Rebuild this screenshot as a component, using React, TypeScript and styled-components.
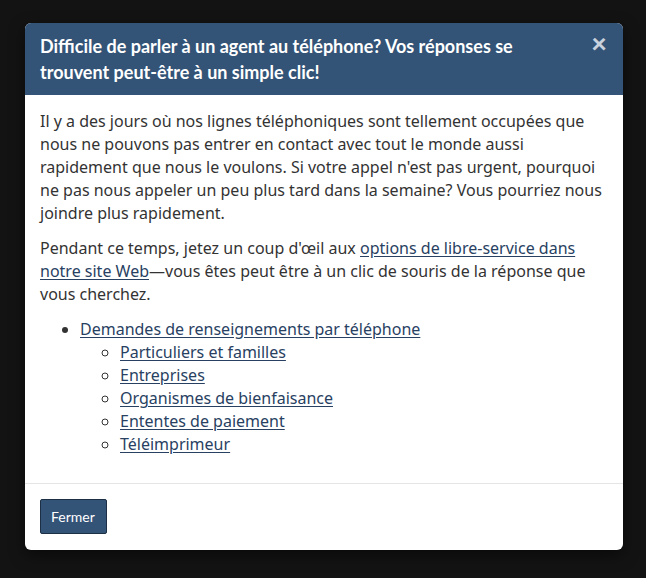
import React from "react";
import styled, { createGlobalStyle } from "styled-components";

const Global = createGlobalStyle`
  html, body { margin: 0; padding: 0; background: #131313; }
  body { font-family: "Noto Sans", sans-serif; }
  * { box-sizing: border-box; }
`;

const Backdrop = styled.div`
  min-height: 578px;
  padding: 23px 23px 0 25px;
  background: #131313;
`;

const Dialog = styled.div`
  width: 598px;
  background: #fff;
  border-radius: 6px;
  overflow: hidden;
  box-shadow: 0 5px 15px rgba(0, 0, 0, 0.5);
`;

const Header = styled.header`
  display: flex;
  align-items: flex-start;
  gap: 12px;
  background: #335377;
  padding: 10px 15px 10px 15px;
`;

const Title = styled.h2`
  flex: 1;
  margin: 0;
  font-family: "Lato", sans-serif;
  font-weight: 700;
  font-size: 18px;
  line-height: 26px;
  color: #fff;
`;

const Close = styled.button`
  border: 0;
  background: none;
  padding: 0;
  margin: 0 1px 0 0;
  font-family: "Lato", sans-serif;
  font-weight: 900;
  font-size: 27px;
  line-height: 20px;
  color: #c9d1dc;
  cursor: pointer;
`;

const Body = styled.div`
  padding: 15px 15px;
  color: #333;
  font-size: 16px;
  line-height: 23px;
`;

const P = styled.p`
  margin: 0 0 12px;
`;

const Link = styled.a`
  color: #284162;
  text-decoration: underline;
  text-underline-offset: 2px;
`;

const List = styled.ul<{ $nested?: boolean }>`
  margin: ${(p) => (p.$nested ? "0" : "0 0 12px")};
  padding-left: 40px;
  list-style-type: ${(p) => (p.$nested ? "circle" : "disc")};
`;

const Footer = styled.footer`
  border-top: 1px solid #e5e5e5;
  padding: 15px 15px 16px;
`;

const Button = styled.button`
  font-family: "Lato", sans-serif;
  font-size: 14px;
  line-height: 20px;
  padding: 7px 11px 6px 10px;
  color: #fff;
  background: #335377;
  border: 1px solid #1c2f45;
  border-radius: 2px;
  cursor: pointer;
`;

const subItems = [
  "Particuliers et familles",
  "Entreprises",
  "Organismes de bienfaisance",
  "Ententes de paiement",
  "Téléimprimeur",
];

export default function App() {
  return (
    <>
      <Global />
      <Backdrop>
        <Dialog role="dialog">
          <Header>
            <Title>
              Difficile de parler à un agent au téléphone? Vos réponses se trouvent peut-être à un simple clic!
            </Title>
            <Close aria-label="Fermer">×</Close>
          </Header>
          <Body>
            <P>
              Il y a des jours où nos lignes téléphoniques sont tellement occupées que nous ne pouvons pas entrer en
              contact avec tout le monde aussi rapidement que nous le voulons. Si votre appel n'est pas urgent,
              pourquoi ne pas nous appeler un peu plus tard dans la semaine? Vous pourriez nous joindre plus
              rapidement.
            </P>
            <P>
              Pendant ce temps, jetez un coup d'œil aux{" "}
              <Link href="#">options de libre-service dans notre site Web</Link>—vous êtes peut être à un clic de
              souris de la réponse que vous cherchez.
            </P>
            <List>
              <li>
                <Link href="#">Demandes de renseignements par téléphone</Link>
                <List $nested>
                  {subItems.map((s) => (
                    <li key={s}>
                      <Link href="#">{s}</Link>
                    </li>
                  ))}
                </List>
              </li>
            </List>
          </Body>
          <Footer>
            <Button>Fermer</Button>
          </Footer>
        </Dialog>
      </Backdrop>
    </>
  );
}
